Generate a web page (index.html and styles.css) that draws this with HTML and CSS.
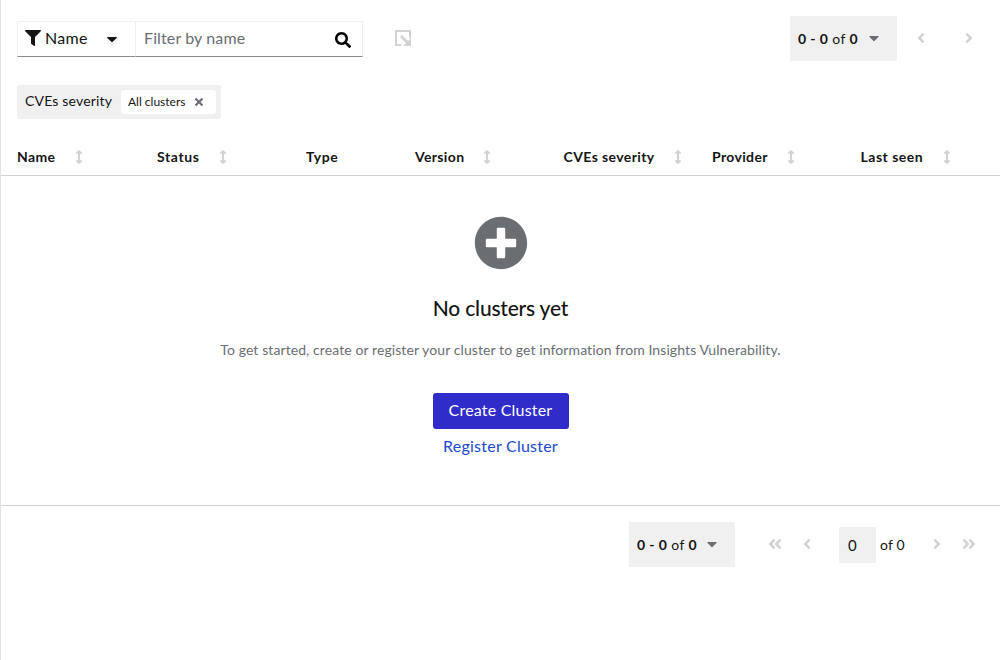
FILE: index.html
```html
<!DOCTYPE html>
<html lang="en">
<head>
<meta charset="utf-8">
<title>Clusters</title>
<link rel="stylesheet" href="styles.css">
</head>
<body>
<svg class="defs" aria-hidden="true">
  <symbol id="filter" viewBox="0 0 512 512"><path d="M487.976 0H24.028C2.71 0-8.047 25.866 7.058 40.971L192 225.941V432c0 7.831 3.821 15.17 10.237 19.662l80 55.98C298.02 518.69 320 507.493 320 487.98V225.941l184.947-184.97C520.021 25.896 509.338 0 487.976 0z"/></symbol>
  <symbol id="caret" viewBox="0 0 320 512"><path d="M31.3 192h257.3c17.8 0 26.7 21.5 14.1 34.1L174.1 354.8c-7.8 7.8-20.5 7.8-28.3 0L17.2 226.1C4.6 213.5 13.5 192 31.3 192z"/></symbol>
  <symbol id="search" viewBox="0 0 512 512"><path d="M505 442.7L405.3 343c-4.5-4.5-10.6-7-17-7H372c27.6-35.3 44-79.7 44-128C416 93.1 322.9 0 208 0S0 93.1 0 208s93.1 208 208 208c48.3 0 92.7-16.4 128-44v16.3c0 6.4 2.5 12.5 7 17l99.7 99.7c9.4 9.4 24.6 9.4 33.9 0l28.3-28.3c9.4-9.4 9.4-24.6.1-34zM208 336c-70.7 0-128-57.2-128-128 0-70.7 57.2-128 128-128 70.7 0 128 57.2 128 128 0 70.7-57.2 128-128 128z"/></symbol>
  <symbol id="times" viewBox="0 0 352 512"><path d="M242.72 256l100.07-100.07c12.28-12.28 12.28-32.19 0-44.48l-22.24-22.24c-12.28-12.28-32.19-12.28-44.48 0L176 189.28 75.93 89.21c-12.28-12.28-32.19-12.28-44.48 0L9.21 111.45c-12.28 12.28-12.28 32.19 0 44.48L109.28 256 9.21 356.07c-12.28 12.28-12.28 32.19 0 44.48l22.24 22.24c12.28 12.28 32.2 12.28 44.48 0L176 322.72l100.07 100.07c12.28 12.28 32.2 12.28 44.48 0l22.24-22.24c12.28-12.28 12.28-32.19 0-44.48L242.72 256z"/></symbol>
  <symbol id="left" viewBox="0 0 256 512"><path d="M31.7 239l136-136c9.4-9.4 24.6-9.4 33.9 0l22.6 22.6c9.4 9.4 9.4 24.6 0 33.9L127.9 256l96.4 96.4c9.4 9.4 9.4 24.6 0 33.9L201.7 409c-9.4 9.4-24.6 9.4-33.9 0l-136-136c-9.5-9.4-9.5-24.6-.1-34z"/></symbol>
  <symbol id="first" viewBox="0 0 448 512"><path d="M223.7 239l136-136c9.4-9.4 24.6-9.4 33.9 0l22.6 22.6c9.4 9.4 9.4 24.6 0 33.9L319.9 256l96.4 96.4c9.4 9.4 9.4 24.6 0 33.9L393.7 409c-9.4 9.4-24.6 9.4-33.9 0l-136-136c-9.5-9.4-9.5-24.6-.1-34zm-192 34l136 136c9.4 9.4 24.6 9.4 33.9 0l22.6-22.6c9.4-9.4 9.4-24.6 0-33.9L127.9 256l96.4-96.4c9.4-9.4 9.4-24.6 0-33.9L201.7 103c-9.4-9.4-24.6-9.4-33.9 0l-136 136c-9.5 9.4-9.5 24.6-.1 34z"/></symbol>
  <symbol id="sort" viewBox="0 0 256 512"><path d="M214.059 377.941H168V134.059h46.059c21.382 0 32.09-25.851 16.971-40.971L144.971 7.029c-9.373-9.373-24.568-9.373-33.941 0L24.971 93.088c-15.119 15.119-4.411 40.971 16.971 40.971H88v243.882H41.941c-21.382 0-32.09 25.851-16.971 40.971l86.059 86.059c9.373 9.373 24.568 9.373 33.941 0l86.059-86.059c15.12-15.119 4.412-40.971-16.97-40.971z"/></symbol>
</svg>
<main class="page">
  <div class="toolbar">
    <div class="filter-type">
      <svg class="icon16"><use href="#filter"/></svg>
      <span class="filter-name">Name</span>
      <svg class="caret-lg"><use href="#caret"/></svg>
    </div>
    <div class="search">
      <span class="placeholder">Filter by name</span>
      <svg class="icon16"><use href="#search"/></svg>
    </div>
    <svg class="export" viewBox="0 0 16 16"><path d="M0 0h16v9.5l-2-2V2H2v12h4v2H0z"/><path d="M5 7l2-2 6 6 3-2.5V16H8.5l2.5-3z"/></svg>
    <div class="range"><span class="range-text"><b>0 - 0</b> of <b>0</b></span><svg class="caret"><use href="#caret"/></svg></div>
    <div class="arrows">
      <svg class="angle"><use href="#left"/></svg>
      <svg class="angle flip"><use href="#left"/></svg>
    </div>
  </div>
  <div class="chips">
    <span class="chips-label">CVEs severity</span>
    <span class="chip"><span class="chip-text">All clusters</span><svg class="close"><use href="#times"/></svg></span>
  </div>
  <div class="thead">
    <div class="th"><span class="w-name">Name</span><svg class="sort"><use href="#sort"/></svg></div>
    <div class="th"><span class="w-status">Status</span><svg class="sort"><use href="#sort"/></svg></div>
    <div class="th"><span class="w-type">Type</span></div>
    <div class="th"><span class="w-version">Version</span><svg class="sort"><use href="#sort"/></svg></div>
    <div class="th"><span class="w-cves">CVEs severity</span><svg class="sort"><use href="#sort"/></svg></div>
    <div class="th"><span class="w-provider">Provider</span><svg class="sort"><use href="#sort"/></svg></div>
    <div class="th"><span class="w-seen">Last seen</span><svg class="sort"><use href="#sort"/></svg></div>
  </div>
  <section class="empty">
    <svg class="plus" viewBox="0 0 512 512"><path d="M256 8C119 8 8 119 8 256s111 248 248 248 248-111 248-248S393 8 256 8zm144 276c0 6.6-5.4 12-12 12h-92v92c0 6.6-5.4 12-12 12h-56c-6.6 0-12-5.4-12-12v-92h-92c-6.6 0-12-5.4-12-12v-56c0-6.6 5.4-12 12-12h92v-92c0-6.6 5.4-12 12-12h56c6.6 0 12 5.4 12 12v92h92c6.6 0 12 5.4 12 12v56z"/></svg>
    <h2 class="title">No clusters yet</h2>
    <p class="desc">To get started, create or register your cluster to get information from Insights Vulnerability.</p>
    <button class="primary">Create Cluster</button>
    <a class="link">Register Cluster</a>
  </section>
  <div class="footer">
    <div class="range"><span class="range-text"><b>0 - 0</b> of <b>0</b></span><svg class="caret"><use href="#caret"/></svg></div>
    <div class="nav-prev">
      <svg class="double"><use href="#first"/></svg>
      <svg class="angle"><use href="#left"/></svg>
    </div>
    <div class="page-input">0</div>
    <span class="page-total">of 0</span>
    <div class="nav-next">
      <svg class="angle flip"><use href="#left"/></svg>
      <svg class="double flip"><use href="#first"/></svg>
    </div>
  </div>
</main>
</body>
</html>
```
FILE: styles.css
```css
* { box-sizing: border-box; }
body { margin: 0; background: #fff; color: #151515; font-family: Lato, "Open Sans", sans-serif; font-size: 14px; }
svg { display: block; flex: none; fill: currentColor; }
.defs { display: none; }
.page { height: 660px; border-left: 1px solid #e4e4e4; overflow: hidden; }
.icon16 { width: 16px; height: 16px; }
.toolbar { display: flex; align-items: flex-start; height: 69px; padding: 16px 16px 0; }
.filter-type, .search { display: flex; align-items: center; height: 36px; margin-top: 5px; border: 1px solid #f0f0f0; border-bottom-color: #8a8d90; font-size: 16px; }
.filter-type { width: 119px; padding-left: 7px; }
.filter-type .icon16 { margin-top: -2px; }
.filter-name { width: 58px; margin-left: 4px; padding-bottom: 3px; letter-spacing: .3px; }
.caret-lg { width: 10px; height: 16px; margin: -1px 0 0 4px; overflow: visible; transform: scaleX(1.05); }
.search { width: 228px; margin-left: -1px; padding: 0 11px 0 8px; justify-content: space-between; }
.search .icon16 { color: #000; margin-top: 2px; }
.placeholder { padding-bottom: 3px; color: #6a6e73; letter-spacing: .12px; }
.export { width: 16px; height: 16px; margin: 14px 0 0 32px; color: #d2d2d2; }
.range { display: flex; align-items: center; width: 107px; height: 45px; padding-left: 8px; background: #f0f0f0; white-space: nowrap; }
.range-text { width: 61px; padding-bottom: 1px; letter-spacing: .4px; }
.range b { font-weight: 700; }
.caret { width: 10px; height: 16px; margin: -1px 0 0 10px; color: #6a6e73; }
.toolbar .range { margin-left: auto; }
.arrows { display: flex; justify-content: space-between; width: 56px; margin: 14px 11px 0 20px; color: #d2d2d2; }
.angle { width: 8px; height: 16px; }
.flip { transform: scaleX(-1); }
.chips { display: flex; align-items: center; width: 204px; height: 34px; margin: 16px 0 0 16px; padding: 0 5px 0 8px; border-radius: 3px; background: #f0f0f0; }
.chips-label { width: 96px; padding-bottom: 3px; letter-spacing: .17px; white-space: nowrap; }
.chip { display: flex; align-items: center; width: 95px; height: 24px; padding-left: 7px; border-radius: 3px; background: #fff; font-size: 12px; }
.chip-text { width: 67px; padding-bottom: 1px; white-space: nowrap; }
.close { width: 8px; height: 12px; color: #6a6e73; }
.thead { display: grid; grid-template-columns: 140px 149px 109px 148.5px 148.5px 148.5px 1fr; align-items: center; height: 57px; padding-left: 16px; padding-top: 19px; border-bottom: 1px solid #d2d2d2; }
.th { display: flex; align-items: center; font-weight: 700; white-space: nowrap; height: 36px; letter-spacing: .35px; }
.sort { width: 8px; height: 14px; margin-left: 19px; color: #d2d2d2; }
.w-name { width: 39px; }
.w-status { width: 43px; letter-spacing: .6px; }
.w-type { letter-spacing: .6px; }
.w-version { width: 49px; }
.w-cves { width: 91px; letter-spacing: .4px; }
.w-provider { width: 56px; }
.w-seen { width: 63px; letter-spacing: .5px; }
.empty { display: flex; flex-direction: column; align-items: center; height: 330px; padding-top: 40px; border-bottom: 1px solid #d2d2d2; }
.plus { width: 54px; height: 54px; color: #6a6e73; }
.title { margin: 22px 0 0; font-size: 21px; line-height: 32px; font-weight: 500; letter-spacing: -.2px; }
.desc { margin: 15px 0 0; line-height: 21px; color: #6a6e73; letter-spacing: .09px; white-space: nowrap; }
.primary { width: 136px; height: 36px; margin-top: 33px; padding: 0 0 3px; border: 0; border-radius: 3px; background: #2f2cca; color: #fff; font: inherit; font-size: 16px; letter-spacing: .2px; }
.link { margin-top: 5px; font-size: 16px; line-height: 24px; color: #2149cf; letter-spacing: .24px; }
.footer { display: flex; align-items: center; height: 77px; padding-left: 628px; }
.footer .range { width: 106px; }
.footer .caret { margin-left: 9px; }
.nav-prev, .nav-next { display: flex; justify-content: space-between; margin-top: -2px; color: #d2d2d2; }
.nav-prev { width: 43px; margin-left: 33px; }
.page-input { width: 37px; height: 36px; margin-left: 28px; padding-left: 9px; background: #f0f0f0; font-size: 15px; line-height: 36px; }
.page-total { width: 26px; margin-left: 4px; white-space: nowrap; letter-spacing: .2px; }
.nav-next { width: 43px; margin-left: 27px; }
.double { width: 14px; height: 16px; }
```
